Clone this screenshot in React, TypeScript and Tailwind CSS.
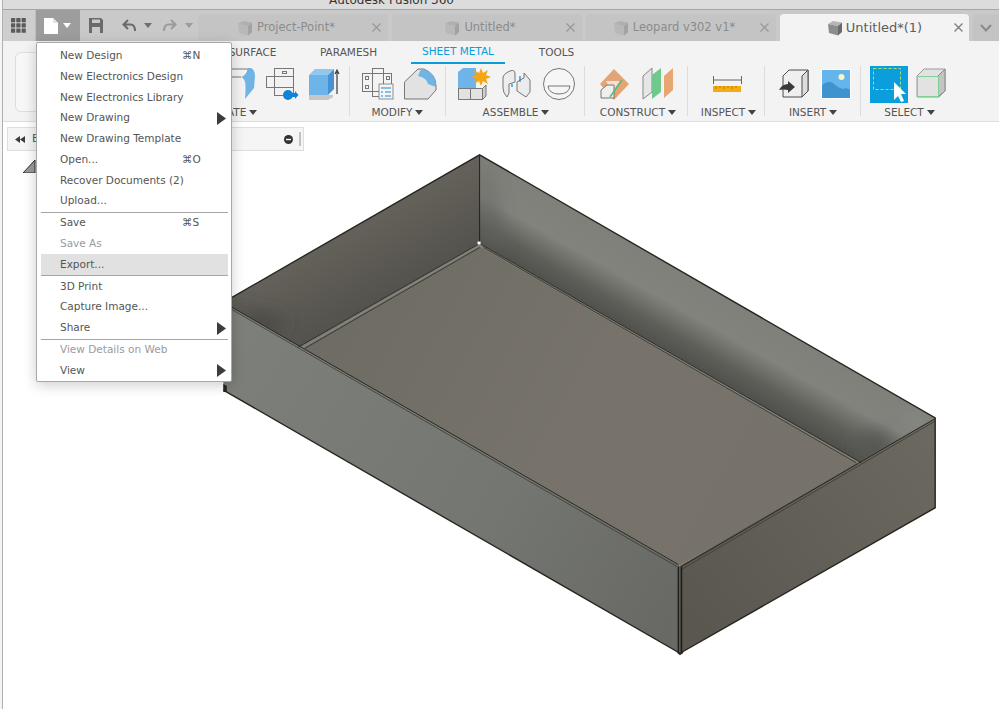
import type { ReactNode } from 'react';

const menuGroups = [
	[
		{ label: 'New Design', shortcut: '⌘N' },
		{ label: 'New Electronics Design' },
		{ label: 'New Electronics Library' },
		{ label: 'New Drawing', arrow: true },
		{ label: 'New Drawing Template' },
		{ label: 'Open...', shortcut: '⌘O' },
		{ label: 'Recover Documents (2)' },
		{ label: 'Upload...' },
	],
	[
		{ label: 'Save', shortcut: '⌘S' },
		{ label: 'Save As', disabled: true },
		{ label: 'Export...', active: true },
	],
	[
		{ label: '3D Print' },
		{ label: 'Capture Image...' },
		{ label: 'Share', arrow: true },
	],
	[
		{ label: 'View Details on Web', disabled: true },
		{ label: 'View', arrow: true },
	],
];

const tabs = [
	{ name: 'Project-Point*' },
	{ name: 'Untitled*' },
	{ name: 'Leopard v302 v1*' },
	{ name: 'Untitled*(1)', active: true },
];

function Caret({ className }: { className: string }) {
	return (
		<svg width="8" height="5" viewBox="0 0 8 5" className={className}>
			<path d="M0 0H8L4 5Z" fill="currentColor" />
		</svg>
	);
}

function TabCube({ active }: { active?: boolean }) {
	return (
		<svg width="16" height="16" viewBox="0 0 16 16" className="shrink-0">
			<path d="M1 4L6 1L15 2.5L11 6Z" fill={active ? '#b5b5b5' : '#b0b0b0'} />
			<path d="M1 4L11 6V15.5L2 13Z" fill={active ? '#8c8c8c' : '#b8b8b8'} />
			<path d="M11 6L15 2.5V12L11 15.5Z" fill={active ? '#6a6a6a' : '#a2a2a2'} />
		</svg>
	);
}

function Tab({ name, active }: { name: string; active?: boolean }) {
	return (
		<div
			className={
				active
					? 'relative flex h-[27px] w-[189px] items-center justify-center gap-[3px] rounded-t-[4px] bg-[#f3f3f3] text-[13px] text-[#5c5c5c]'
					: 'relative flex h-[27px] w-[190px] items-center justify-center gap-[4px] rounded-t-[4px] bg-[#c4c4c4] pr-[14px] text-[11.5px] text-[#8b8b8b]'
			}
		>
			<TabCube active={active} />
			<span className="truncate">{name}</span>
			<svg
				width="9"
				height="9"
				viewBox="0 0 9 9"
				fill="none"
				stroke={active ? '#808080' : '#9a9a9a'}
				strokeWidth="1.4"
				className={active ? 'absolute right-[6px] top-[9px]' : 'absolute right-[7px] top-[9px]'}
			>
				<path d="M0.5 0.5L8.5 8.5M8.5 0.5L0.5 8.5" />
			</svg>
		</div>
	);
}

function Group({
	x,
	width,
	label,
	children,
	border = true,
	labelClass = '',
}: {
	x: number;
	width: number;
	label: string;
	children: ReactNode;
	border?: boolean;
	labelClass?: string;
}) {
	return (
		<div
			className={
				border
					? 'flex h-[50px] flex-col items-center border-r border-[#dcdcdc]'
					: 'flex h-[50px] flex-col items-center'
			}
			style={{ width }}
		>
			{/* drawn in page coordinates, keeps icon paths easy to compare */}
			<svg width={width} height={37} viewBox={`${x} 66 ${width} 37`} className="shrink-0">
				{children}
			</svg>
			<div className={'mt-[2px] flex items-center gap-[3px] text-[10.5px] leading-[14px] text-[#555555] ' + labelClass}>
				{label}
				<Caret className="text-[#444444]" />
			</div>
		</div>
	);
}

function Row({ label, shortcut, arrow, disabled, active }: { label: string; shortcut?: string; arrow?: boolean; disabled?: boolean; active?: boolean }) {
	return (
		<div
			className={
				(active ? 'bg-[#e1e1e1] ' : '') +
				'relative flex h-[20.8px] items-center pl-[19px] text-[10.5px] ' +
				(disabled ? 'text-[#9b9b9b]' : 'text-[#555555]')
			}
		>
			<span>{label}</span>
			{shortcut && <span className="absolute left-[141px]">{shortcut}</span>}
			{arrow && (
				<svg width="9" height="13" viewBox="0 0 9 13" className="absolute left-[176px] top-[4px]">
					<path d="M0 0L9 6.5L0 13Z" fill="#3c3c3c" />
				</svg>
			)}
		</div>
	);
}

function FileMenu() {
	return (
		<div className="absolute left-[36px] top-[42px] h-[340px] w-[196px] rounded-[2px] border border-[#a8a8a8] bg-white pl-[4px] pr-[3px] pt-[2.4px] shadow-[0_3px_14px_rgba(0,0,0,0.2)]">
			{menuGroups.map((group, i) => (
				<div key={i} className={i > 0 ? 'border-t border-[#a6a6a6]' : ''}>
					{group.map((item) => (
						<Row key={item.label} {...item} />
					))}
				</div>
			))}
		</div>
	);
}

function Model() {
	return (
		<svg className="absolute inset-0 h-full w-full" viewBox="0 122 999 587">
			<defs>
				<linearGradient id="backWall" gradientUnits="userSpaceOnUse" x1="400" y1="190" x2="440" y2="262">
					<stop offset="0" stopColor="#66635c" />
					<stop offset="1" stopColor="#55534d" />
				</linearGradient>
				<linearGradient id="rightWall" gradientUnits="userSpaceOnUse" x1="718" y1="293" x2="680" y2="360">
					<stop offset="0" stopColor="#7f807a" />
					<stop offset="0.42" stopColor="#82837d" />
					<stop offset="0.75" stopColor="#5e5f59" />
					<stop offset="1" stopColor="#4f504b" />
				</linearGradient>
				<linearGradient id="floor" gradientUnits="userSpaceOnUse" x1="300" y1="250" x2="860" y2="560">
					<stop offset="0" stopColor="#6c6a62" />
					<stop offset="0.5" stopColor="#77736a" />
					<stop offset="1" stopColor="#76726a" />
				</linearGradient>
				<linearGradient id="frontLeft" gradientUnits="userSpaceOnUse" x1="230" y1="340" x2="680" y2="610">
					<stop offset="0" stopColor="#7d7f7a" />
					<stop offset="0.6" stopColor="#747671" />
					<stop offset="1" stopColor="#686964" />
				</linearGradient>
				<linearGradient id="frontRight" gradientUnits="userSpaceOnUse" x1="930" y1="440" x2="690" y2="620">
					<stop offset="0" stopColor="#6b6860" />
					<stop offset="1" stopColor="#5a5750" />
				</linearGradient>
				<filter id="soft" x="-50%" y="-50%" width="200%" height="200%">
					<feGaussianBlur stdDeviation="9" />
				</filter>
				<clipPath id="rightClip">
					<path d="M478 154L935 418L860 463L478 243Z" />
				</clipPath>
				<clipPath id="leftClip">
					<path d="M478 154V243L297 347L221 302Z" />
				</clipPath>
			</defs>

			<path d="M478 154V243L297 347L221 302Z" fill="url(#backWall)" />
			<path d="M478 154L935 418L860 463L478 243Z" fill="url(#rightWall)" />
			<g clipPath="url(#rightClip)">
				<path d="M478 160V240L505 250L490 180Z" fill="#62635e" filter="url(#soft)" opacity="0.6" />
				<ellipse cx="874" cy="446" rx="18" ry="14" fill="#565752" filter="url(#soft)" />
				<ellipse cx="914" cy="418" rx="10" ry="7" fill="#8b8c86" filter="url(#soft)" />
			</g>
			<g clipPath="url(#leftClip)">
				<path d="M225 305L265 335L285 320Z" fill="#45443f" filter="url(#soft)" />
			</g>
			<path d="M478 243L860 463L679 566L297 347Z" fill="url(#floor)" />
			<path d="M221 302L679 566V654L221 390Z" fill="url(#frontLeft)" />
			<path d="M679 566L935 418V508L679 654Z" fill="url(#frontRight)" />

			{/* folded seams along the floor */}
			<g fill="none">
				<path d="M478 245L299 348M478 245L859 464" stroke="#85847d" strokeWidth="1.6" />
				<path d="M478 243L296 347M478 243L861 463" stroke="#2e2e29" />
				<path d="M478 247L303 348M482 247L856 463" stroke="#3a3a35" />
			</g>

			{/* outer edges */}
			<g fill="none" stroke="#26261f" strokeWidth="1.4">
				<path d="M221 302L478 154L935 418V508L679 654L221 390" />
				<path d="M478 154V243" strokeWidth="1.1" />
				<path d="M221 302L677.5 565" strokeWidth="1" />
				<path d="M224 306L676 567" strokeWidth="0.8" stroke="#3a3a34" />
				<path d="M680.5 567L935 418.5" strokeWidth="1" />
				<path d="M680.5 570L935 421" strokeWidth="0.8" stroke="#3a3a34" />
			</g>
			<path d="M476 241H479V244H476Z" fill="#ffffff" />
			<path d="M677.5 567V653M680.5 567V653" stroke="#1e1e1a" strokeWidth="1.6" />
			<path d="M221 384V392H224.5V386Z" fill="#26261f" />
			<path d="M676.5 653L679 655L682 653" stroke="#26261f" strokeWidth="1.5" fill="none" />
		</svg>
	);
}

export default function App() {
	return (
		<div className="relative flex h-[709px] w-[999px] overflow-hidden bg-white font-['DejaVu_Sans',sans-serif]">
			{/* window edge */}
			<div className="w-[3px] shrink-0 border-r border-[#b0b0b0] bg-[#f4f4f4]" />

			<div className="flex min-w-0 flex-1 flex-col">
				{/* title bar */}
				<div className="flex h-[10px] shrink-0 items-end overflow-hidden border-b border-[#a5a5a5] bg-[#dcdcdc] pl-[326px]">
					<span className="mb-[1px] whitespace-nowrap text-[12px] leading-[16px] text-[#333333]">Autodesk Fusion 360</span>
				</div>

				{/* toolbar + document tabs */}
				<div className="flex h-[31px] shrink-0 items-end bg-[#c9c9c9]">
					<div className="flex h-full w-[33px] items-center border-r border-[#bdbdbd] bg-[#cecece] pl-[8px]">
						<svg width="15" height="15" viewBox="0 0 15 15" fill="#5b5b5b">
							{[0, 5.3, 10.6].map((y) =>
								[0, 5.3, 10.6].map((x) => <rect key={`${x}-${y}`} x={x} y={y} width="4.2" height="4.2" rx="0.5" />),
							)}
						</svg>
					</div>
					<div className="flex h-full w-[44px] items-center gap-[5px] bg-[#9d9d9d] pl-[8px]">
						<svg width="14" height="16" viewBox="0 0 14 16">
							<path d="M0 0H9L14 5V16H0Z" fill="#ffffff" />
							<path d="M9 0V5H14" fill="#e2e2e2" />
						</svg>
						<Caret className="text-white" />
					</div>
					<div className="flex h-full w-[32px] items-center pl-[9px]">
						<svg width="14" height="15" viewBox="0 0 14 15">
							<path d="M0 0H12L14 2V15H0Z" fill="#6a6a6a" />
							<rect x="3" y="1.5" width="8" height="3.5" fill="#c9c9c9" />
							<rect x="3" y="9" width="8" height="6" fill="#c9c9c9" />
						</svg>
					</div>
					<div className="flex h-full w-[43px] items-center gap-[8px] pl-[10px]">
						<svg width="14" height="13" viewBox="0 0 14 13" fill="none" stroke="#696969" strokeWidth="2">
							<path d="M6 1L1.5 5.5L6 10M1.5 5.5H8.5Q13 5.5 13 12" />
						</svg>
						<Caret className="text-[#6e6e6e]" />
					</div>
					<div className="flex h-full w-[43px] items-center gap-[8px] pl-[8px]">
						<svg width="14" height="13" viewBox="0 0 14 13" fill="none" stroke="#9b9b9b" strokeWidth="2">
							<path d="M8 1L12.5 5.5L8 10M12.5 5.5H5.5Q1 5.5 1 12" />
						</svg>
						<Caret className="text-[#9b9b9b]" />
					</div>
					<div className="flex gap-[4px]">
						{tabs.map((tab) => (
							<Tab key={tab.name} {...tab} />
						))}
					</div>
					<div className="ml-[4px] flex h-[27px] flex-1 items-center justify-center rounded-tl-[4px] bg-[#c4c4c4]">
						<svg width="12" height="8" viewBox="0 0 12 8" fill="none" stroke="#8a8a8a" strokeWidth="2">
							<path d="M1 1L6 6.5L11 1" />
						</svg>
					</div>
				</div>

				{/* ribbon */}
				<div className="flex h-[81px] shrink-0 flex-col border-b border-[#dedede] bg-[#f3f3f3]">
					<div className="flex h-[25px] shrink-0 pl-[202px] text-[10.5px] text-[#555555]">
						<div className="flex h-[23px] w-[95px] items-center justify-center">SURFACE</div>
						<div className="flex h-[23px] w-[97px] items-center justify-center">PARAMESH</div>
						<div className="ml-[14px] flex h-[23px] w-[94px] items-center justify-center border-b-[2px] border-[#0a9ddb] pt-[1px] text-[#0a9ddb]">SHEET METAL</div>
						<div className="flex h-[23px] w-[103px] items-center justify-center">TOOLS</div>
					</div>
					<div className="flex">
						<div className="w-[111px] shrink-0">
							<div className="-mt-[14px] ml-[12px] h-[60px] w-[50px] rounded-[6px] border border-[#dddddd] bg-[#f7f7f7]" />
						</div>
						<Group x={114} width={236} label="CREATE">
							<path d="M232 69H250M232 77H241" stroke="#777777" fill="none" />
							<path d="M241 77Q246 76 248 68H251Q255 70 255 76L254 88L245 99Q246 85 245 82Q244 78 241 77Z" fill="#70b4e6" />
							<g fill="#f2f2f2" stroke="#777777">
								<rect x="274.5" y="68.5" width="19" height="27" />
								<rect x="266.5" y="76.5" width="27" height="11" fill="none" />
								<rect x="282.5" y="71.5" width="4" height="2" />
							</g>
							<circle cx="288" cy="95" r="5" fill="#0d84da" />
							<path d="M292 93H295V91L298.5 95L295 99V97H292Z" fill="#0d84da" />
							<path d="M309 95H333V97L328 100H309Z" fill="#c6c6c6" />
							<path d="M309 75H328V95H309Z" fill="#6fb4e8" />
							<path d="M309 75L315 69H334L328 75Z" fill="#93c8ee" />
							<path d="M328 75L334 69V89L328 95Z" fill="#4893cf" />
							<path d="M337 94V72M335 74L337 70L339 74" stroke="#3a3a3a" strokeWidth="1.2" fill="none" />
						</Group>
						<Group x={350} width={96} label="MODIFY">
							<g fill="none" stroke="#777777">
								<rect x="372.5" y="68.5" width="11" height="28" />
								<rect x="362.5" y="73.5" width="29" height="18" />
								<rect x="365.5" y="76.5" width="3" height="3" />
								<rect x="365.5" y="85.5" width="3" height="3" />
								<rect x="386.5" y="76.5" width="3" height="3" />
							</g>
							<rect x="379" y="84" width="14" height="15" fill="#f4f4f4" stroke="#777777" strokeWidth="0.8" />
							<path d="M381 88H391M381 92H383M385 92H391M381 96H383M385 96H391" stroke="#1c8ad6" />
							<path d="M404.5 82L418 69H424Q436 74 436 86V90L428 99H404.5Z" fill="#e2e2e2" stroke="#777777" />
							<path d="M421 69Q436 71 436 87L428 84Q427 78 418 76Z" fill="#70b4e6" />
						</Group>
						<Group x={446} width={139} label="ASSEMBLE" labelClass="ml-[2px]">
							<path d="M458 72L463 68H476V88H458Z" fill="#6fb4e8" />
							<rect x="458.5" y="88.5" width="12" height="11" fill="#e2e2e2" stroke="#777777" />
							<path d="M470.5 88.5H482.5V99.5H470.5Z" fill="#e2e2e2" stroke="#777777" />
							<path d="M482.5 88.5L486 85V96L482.5 99.5Z" fill="#cfcfcf" stroke="#777777" />
							<path d="M481 68L483 73L488 70L486 75L491 77L486 79L488 84L483 81L481 86L479 81L474 84L476 79L471 77L476 75L474 70L479 73Z" fill="#f5a511" />
							<g fill="#ececec" stroke="#777777">
								<path d="M503 78Q503 74 510 71Q515 69 515 74V82L509 84V93L507 97Q503 93 503 88Z" />
								<path d="M517 82L520 80L524 78V73L530 80V92L526 97L517 91Z" />
							</g>
							<path d="M520 76V82M512 84V87" stroke="#1c8ad6" strokeWidth="1.3" />
							<circle cx="559" cy="84" r="15.5" fill="#f6f6f6" stroke="#777777" />
							<path d="M548 86H570Q569 94 559 94Q549 94 548 86Z" fill="#f6f6f6" stroke="#777777" />
						</Group>
						<Group x={585} width={103} label="CONSTRUCT" labelClass="ml-[4px]">
							<path d="M614 69L629 84L614 100L600 84Z" fill="#e3a575" />
							<path d="M606 81H620L612 92Z" fill="#f3e3d6" />
							<path d="M601 90L607 85H614V98H601Z" fill="#efefef" stroke="#777777" />
							<path d="M610 97L622 80" stroke="#4fbe7b" strokeWidth="1.5" />
							<path d="M643 76L652 68V92L643 99Z" fill="#e6e6e6" stroke="#888888" />
							<path d="M652 75L661 68V92L652 99Z" fill="#6fc88c" />
							<path d="M664 76L673 68V90L664 98Z" fill="#e8a672" />
						</Group>
						<Group x={688} width={77} label="INSPECT" labelClass="ml-[5px]">
							<path d="M713.5 76V84M741.5 76V84M714 80H741" stroke="#666666" fill="none" />
							<rect x="713" y="86" width="28" height="6" fill="#f5ab13" />
							<path d="M716 86V89M720 86V88M724 86V89M728 86V88M732 86V89M736 86V88" stroke="#b87c08" />
						</Group>
						<Group x={765} width={96} label="INSERT" labelClass="ml-[1px]">
							<path d="M783 76L789 70H808V91L802 97H783Z" fill="#efefef" stroke="#4c4c4c" />
							<path d="M802 76L808 70V91L802 97Z" fill="#dcdcdc" stroke="#4c4c4c" />
							<path d="M779 90Q782 84 788 84V81L795 87L788 93V90Q783 89 779 90Z" fill="#3a3a3a" />
							<rect x="821.5" y="69.5" width="29" height="29" fill="#63b5ec" stroke="#ffffff" />
							<circle cx="841.5" cy="77" r="3" fill="#fdf5c4" />
							<path d="M822 98V85Q828 80 833 83Q838 88 843 89Q847 87 850 90V98Z" fill="#3f93cf" />
						</Group>
						<Group x={861} width={94} label="SELECT" border={false} labelClass="ml-[3px]">
							<rect x="870" y="66" width="38" height="37" fill="#0b9edd" />
							<rect x="873.5" y="68.5" width="27" height="21" fill="none" stroke="#a6e46f" strokeDasharray="3 2" />
							<path d="M894 82L906 94H901L904 101L901 102L898 96L894 100Z" fill="#ffffff" />
							<path d="M917 76L924 69H945V91L939 97H917Z" fill="#e2e2e2" stroke="#999999" />
							<path d="M938 76L945 69V91L938 97Z" fill="#c4c4c4" stroke="#888888" />
							<rect x="917.5" y="76.5" width="21" height="20" fill="#e2e2e2" stroke="#7fcf97" />
						</Group>
					</div>
				</div>

				{/* viewport */}
				<div className="relative flex-1">
					<Model />
					<div className="relative ml-[4px] mt-[5px] flex h-[24px] w-[297px] items-center border border-[#dedede] bg-[#f5f5f5] pl-[7px] text-[11px] text-[#555555]">
						<svg width="10" height="7" viewBox="0 0 10 7" fill="#3c3c3c">
							<path d="M5 0V7L0 3.5ZM10 0V7L5 3.5Z" />
						</svg>
						<span className="ml-[7px]">B</span>
						<svg width="9" height="9" viewBox="0 0 9 9" className="absolute left-[276px] top-[7px]">
							<circle cx="4.5" cy="4.5" r="4.5" fill="#333333" />
							<rect x="2" y="3.8" width="5" height="1.4" fill="#ffffff" />
						</svg>
						<div className="absolute left-[291px] top-[4px] h-[14px] w-[2px] border-x border-[#c2c2c2]" />
					</div>
					<svg width="13" height="13" viewBox="0 0 13 13" className="relative ml-[20px] mt-[9px]">
						<path d="M0 13L12 0V13Z" fill="#9a9a9a" stroke="#2c2c2c" />
					</svg>
				</div>
			</div>

			<FileMenu />
		</div>
	);
}
